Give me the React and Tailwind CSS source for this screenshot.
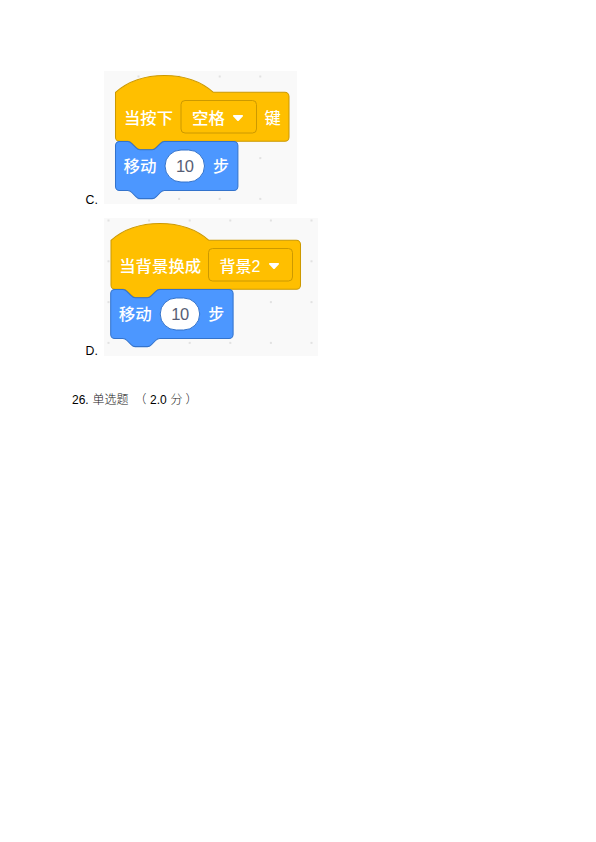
import React from 'react';

const NOTCH = 'H 48 c -2 0 -3 1 -4 2 l -4 4 c -1 1 -2 2 -4 2 h -12 c -2 0 -3 -1 -4 -2 l -4 -4 c -1 -1 -2 -2 -4 -2 H 4 a 4 4 0 0 1 -4 -4';

const Label = ({ x, y, width, fill = '#ffffff', children }) => (
  <text x={x} y={y} textLength={width} fill={fill} lengthAdjust="spacingAndGlyphs" className="font-['Liberation_Sans','Noto_Sans_CJK_SC',sans-serif] text-[16.3px] font-medium">
    {children}
  </text>
);

const Dots = ({ startX, startY, cols, rows }) => (
  <g fill="#e2e2e2">
    {Array.from({ length: cols * rows }, (_, i) => (
      <rect key={i} x={startX + (i % cols) * 40.6} y={startY + Math.floor(i / cols) * 40.8} width="2" height="2" />
    ))}
  </g>
);

// yellow hat block
const HatBlock = ({ x, y, width }) => (
  <path
    transform={`translate(${x} ${y}) scale(1.02)`}
    d={`M 0 0 c 25 -22 71 -22 96 0 H ${width / 1.02 - 4} a 4 4 0 0 1 4 4 v 40 a 4 4 0 0 1 -4 4 ${NOTCH} z`}
    fill="#ffbf00"
    stroke="#cc9900"
  />
);

// blue "move" block with the number input
const MoveBlock = ({ x, y }) => (
  <g transform={`translate(${x} ${y})`}>
    <path
      transform="scale(1.02)"
      d={`M 0 4 a 4 4 0 0 1 4 -4 H 12 c 2 0 3 1 4 2 l 4 4 c 1 1 2 2 4 2 h 12 c 2 0 3 -1 4 -2 l 4 -4 c 1 -1 2 -2 4 -2 H 116 a 4 4 0 0 1 4 4 v 40 a 4 4 0 0 1 -4 4 ${NOTCH} z`}
      fill="#4c97ff"
      stroke="#3373cc"
    />
    <rect x="49.5" y="8.5" width="39.5" height="32" rx="16" fill="#ffffff" stroke="#3373cc" />
    <Label x={8} y={30.3} width={33}>移动</Label>
    <text x="60.5" y="30.3" textLength="18" fill="#575e75" className="font-['Liberation_Sans',sans-serif] text-[16.5px]">10</text>
    <Label x={97.5} y={30.3} width={16}>步</Label>
  </g>
);

const Dropdown = ({ x, y, width, text, textWidth }) => (
  <g transform={`translate(${x} ${y})`}>
    <rect width={width} height="32.5" rx="4" fill="#ffbf00" stroke="#cc9900" />
    <Label x={11} y={23} width={textWidth}>{text}</Label>
    <path d={`M ${width - 23} 14.5 h 9 q 1 .5 .2 1.5 l -3.7 4 q -1 1 -2 0 l -3.7 -4 q -.8 -1 .2 -1.5 z`} fill="#ffffff" />
  </g>
);

export default function App() {
  return (
    <main className="h-[842px] w-[596px] overflow-hidden bg-white pt-[71px] font-['Liberation_Sans','Noto_Sans_CJK_SC',sans-serif] text-[12px] leading-[14px] text-black">
      <div className="flex items-end pl-[85.5px]">
        <span className="w-[18.5px] -mb-[3px] text-[12.3px]">C.</span>
        <svg width="193" height="133" viewBox="0 0 193 133" className="block bg-[#f9f9f9]">
          <Dots startX={33.5} startY={4.5} cols={4} rows={4} />
          <HatBlock x={11.5} y={21.3} width={173.5} />
          <MoveBlock x={11.5} y={70.5} />
          <Label x={20} y={52.5} width={49}>当按下</Label>
          <Dropdown x={77} y={29.5} width={75.5} text="空格" textWidth={33} />
          <Label x={160.5} y={52.5} width={16.3}>键</Label>
        </svg>
      </div>

      <div className="mt-[14px] flex items-end pl-[85.5px]">
        <span className="w-[18.5px] -mb-[2px] text-[12.3px]">D.</span>
        <svg width="214" height="138" viewBox="0 0 214 138" className="block bg-[#f9f9f9]">
          <Dots startX={3.5} startY={1.5} cols={6} rows={4} />
          <HatBlock x={7} y={22.3} width={189.5} />
          <MoveBlock x={6.7} y={71.5} />
          <Label x={15.2} y={53.5} width={82}>当背景换成</Label>
          <Dropdown x={104.5} y={30.5} width={84} text="背景2" textWidth={41} />
        </svg>
      </div>

      <p className="mt-[37px] flex pl-[72px]">
        <span className="w-[20.5px]">26.</span>
        <span className="w-[42px] font-light text-[#222]">单选题</span>
        <span className="w-[15.5px] font-light text-[#222]">（</span>
        <span className="w-[20.5px]">2.0</span>
        <span className="w-[15px] font-light text-[#222]">分</span>
        <span className="font-light text-[#222]">）</span>
      </p>
    </main>
  );
}
